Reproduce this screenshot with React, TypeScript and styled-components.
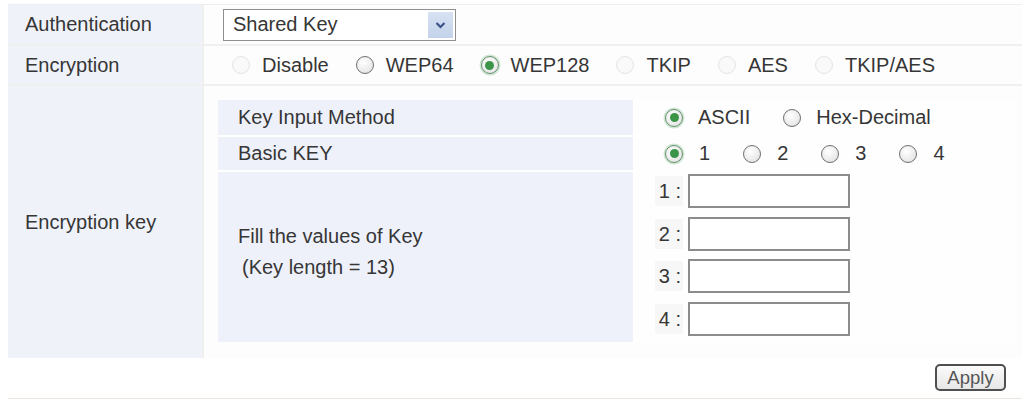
import styled, { createGlobalStyle } from "styled-components"

// #region styled
const GlobalStyle = createGlobalStyle`
  body {
    margin: 0;
    background: #ffffff;
    font-family: "Liberation Sans", Arial, sans-serif;
    color: #363636;
  }
`

const Page = styled.div`
  width: 1028px;
  height: 401px;
  box-sizing: border-box;
  padding: 4px 6px 0 8px;
  display: flex;
  flex-direction: column;
  font-size: 20px;
`

const Table = styled.div`
  display: grid;
  grid-template-columns: 194px 1fr;
  grid-template-rows: 39px 38px 272px;
  gap: 2px;
  background: #f0f0f0;
  border-top: 1px solid #eeeeee;
`

const Label = styled.div`
  background: #f0f2fa;
  display: flex;
  align-items: center;
  padding-left: 17px;
`

const Value = styled.div<{ $pad?: string }>`
  background: #fdfdfd;
  display: flex;
  align-items: center;
  padding: ${(p) => p.$pad ?? "0"};
`

const Select = styled.div`
  width: 233px;
  height: 32px;
  box-sizing: border-box;
  border: 1.5px solid #8e8e8e;
  background: #fff;
  display: flex;
  align-items: center;
  justify-content: space-between;
  padding: 0 2px 0 9px;
`

const DropButton = styled.span`
  width: 25px;
  height: 26px;
  background: linear-gradient(#d7e2f3, #c3d2ea);
  display: flex;
  align-items: center;
  justify-content: center;
`

const Options = styled.div<{ $gap: number }>`
  display: flex;
  align-items: center;
  gap: ${(p) => p.$gap}px;
`

const Option = styled.label<{ $space: number }>`
  display: flex;
  align-items: center;
  gap: ${(p) => p.$space}px;
`

const Radio = styled.span<{ $checked?: boolean; $disabled?: boolean }>`
  position: relative;
  flex: none;
  width: 18px;
  height: 18px;
  box-sizing: border-box;
  border-radius: 50%;
  border: 1.8px solid
    ${(p) => (p.$disabled ? "#e4e4e4" : p.$checked ? "#5f8f69" : "#6f6f6f")};
  background: ${(p) =>
    p.$disabled ? "#f9f9f9" : "radial-gradient(circle at 40% 35%, #ffffff, #dedede)"};
  box-shadow: ${(p) => (p.$checked ? "0 0 0 1.5px #cfe6d3" : "none")};

  &::after {
    content: "";
    display: ${(p) => (p.$checked ? "block" : "none")};
    position: absolute;
    inset: 3.5px;
    border-radius: 50%;
    background: #3c9449;
  }
`

const Inner = styled.div`
  flex: 1;
  align-self: stretch;
  display: grid;
  grid-template-columns: 415px 1fr;
  grid-template-rows: 35px 33px 1fr;
  gap: 2px;
  background: #ffffff;
`

const InnerLabel = styled.div`
  background: #eff1fa;
  display: flex;
  align-items: center;
  padding-left: 20px;
`

const Hint = styled.div`
  line-height: 31px;
  padding-bottom: 10px;

  span {
    display: block;
    padding-left: 4px;
  }
`

const InnerValue = styled.div`
  background: #fefefe;
  display: flex;
  align-items: center;
  padding-left: 30px;
`

const KeyList = styled.div`
  background: #fefefe;
  display: flex;
  flex-direction: column;
  gap: 8.5px;
  padding: 2px 0 0 20px;
`

const KeyRow = styled.div`
  display: flex;
  align-items: center;
  gap: 5px;
`

const KeyNo = styled.span`
  width: 26px;
  text-align: right;
  padding-right: 2px;
  background: #f7f7f7;
  line-height: 30px;
`

const KeyInput = styled.div`
  width: 162px;
  height: 34px;
  box-sizing: border-box;
  border: 2px solid #8c8c8c;
  background: #fff;
`

const Footer = styled.div`
  flex: 1;
  display: flex;
  justify-content: flex-end;
  align-items: flex-start;
  padding: 6px 16px 0 0;
  margin-bottom: 2px;
  border-bottom: 1.5px solid #e6e6e6;
  background: linear-gradient(#ffffff 75%, #fffefa);
`

const ApplyButton = styled.button`
  width: 71px;
  height: 27px;
  padding: 0;
  border: 2px solid #4f4f4f;
  border-radius: 5px;
  background: linear-gradient(#fbfbfb, #e6e6e6);
  font-family: "Liberation Sans", Arial, sans-serif;
  font-size: 18.5px;
  color: #555;
`
// #endregion

const encryptions = [
  { name: "Disable", disabled: true },
  { name: "WEP64" },
  { name: "WEP128", checked: true },
  { name: "TKIP", disabled: true },
  { name: "AES", disabled: true },
  { name: "TKIP/AES", disabled: true },
]

const App = () => {
  return (
    <Page>
      <GlobalStyle />
      <Table>
        <Label>Authentication</Label>
        <Value $pad="0 0 0 19px">
          <Select>
            Shared Key
            <DropButton>
              <svg width="13" height="10" viewBox="0 0 13 10" aria-hidden="true">
                <path d="M2.5 3 L6.5 7 L10.5 3" fill="none" stroke="#3a5487" strokeWidth="2.2" />
              </svg>
            </DropButton>
          </Select>
        </Value>

        <Label>Encryption</Label>
        <Value $pad="0 0 0 28px">
          <Options $gap={27}>
            {encryptions.map((e) => (
              <Option key={e.name} $space={12}>
                <Radio $checked={e.checked} $disabled={e.disabled} />
                {e.name}
              </Option>
            ))}
          </Options>
        </Value>

        <Label>Encryption key</Label>
        <Value $pad="14px 7px 16px 14px">
          <Inner>
            <InnerLabel>Key Input Method</InnerLabel>
            <InnerValue>
              <Options $gap={33}>
                <Option $space={15}>
                  <Radio $checked />
                  ASCII
                </Option>
                <Option $space={15}>
                  <Radio />
                  Hex-Decimal
                </Option>
              </Options>
            </InnerValue>

            <InnerLabel>Basic KEY</InnerLabel>
            <InnerValue>
              <Options $gap={33}>
                {[1, 2, 3, 4].map((n) => (
                  <Option key={n} $space={16}>
                    <Radio $checked={n === 1} />
                    {n}
                  </Option>
                ))}
              </Options>
            </InnerValue>

            <InnerLabel>
              <Hint>
                Fill the values of Key
                <span>(Key length = 13)</span>
              </Hint>
            </InnerLabel>
            <KeyList>
              {[1, 2, 3, 4].map((n) => (
                <KeyRow key={n}>
                  <KeyNo>{n} :</KeyNo>
                  <KeyInput />
                </KeyRow>
              ))}
            </KeyList>
          </Inner>
        </Value>
      </Table>

      <Footer>
        <ApplyButton>Apply</ApplyButton>
      </Footer>
    </Page>
  )
}

export default App
